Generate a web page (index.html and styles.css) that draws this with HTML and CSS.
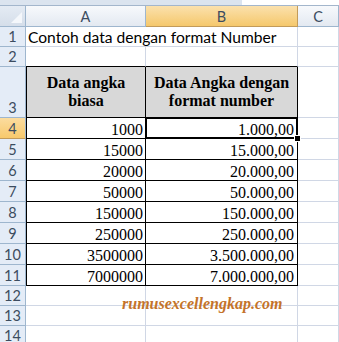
FILE: index.html
```html
<!DOCTYPE html>
<html>
<head>
<meta charset="utf-8">
<link rel="stylesheet" href="styles.css">
</head>
<body>
<div class="topbar"><div class="namebox"></div><div class="fbar"></div></div>
<div class="sheet">
  <div class="corner"><span class="tri"></span></div>
  <div class="ch">A</div><div class="ch ch-sel">B</div><div class="ch">C</div>

  <div class="rh">1</div><div class="c title">Contoh data dengan format Number</div><div class="c"></div>

  <div class="rh">2</div><div class="c top-a"></div><div class="c top-b"></div><div class="c"></div>

  <div class="rh rh-bottom">3</div><div class="t th ta">Data angka<br>biasa</div><div class="t th">Data Angka dengan<br>format number</div><div class="c"></div>

  <div class="rh rh-sel">4</div><div class="t ta">1000</div><div class="t cur">1.000,00<span class="handle"></span></div><div class="c"></div>
  <div class="rh">5</div><div class="t ta">15000</div><div class="t">15.000,00</div><div class="c"></div>
  <div class="rh">6</div><div class="t ta">20000</div><div class="t">20.000,00</div><div class="c"></div>
  <div class="rh">7</div><div class="t ta">50000</div><div class="t">50.000,00</div><div class="c"></div>
  <div class="rh">8</div><div class="t ta">150000</div><div class="t">150.000,00</div><div class="c"></div>
  <div class="rh">9</div><div class="t ta">250000</div><div class="t">250.000,00</div><div class="c"></div>
  <div class="rh">10</div><div class="t ta">3500000</div><div class="t">3.500.000,00</div><div class="c"></div>
  <div class="rh">11</div><div class="t ta">7000000</div><div class="t">7.000.000,00</div><div class="c"></div>

  <div class="rh">12</div><div class="c"></div><div class="c"></div><div class="c"></div>
  <div class="rh">13</div><div class="c"></div><div class="c"></div><div class="c"></div>
  <div class="rh">14</div><div class="c"></div><div class="c"></div><div class="c"></div>

  <div class="watermark">rumusexcellengkap.com</div>
</div>
</body>
</html>
```
FILE: styles.css
```css
html, body {
  margin: 0;
  padding: 0;
  background: #ffffff;
}
body {
  width: 339px;
  height: 342px;
  overflow: hidden;
  font-family: Lato, "Open Sans", sans-serif;
}
.topbar {
  display: flex;
  height: 5px;
  border-bottom: 1px solid #a3b6cc;
}
.namebox {
  width: 242px;
  background: #dbe4ef;
}
.fbar {
  flex: 1;
  background: #ffffff;
}
.sheet {
  position: relative;
  display: grid;
  grid-template-columns: 26px 120px 152px 41px;
  grid-template-rows: 21px 20px 20px 51px repeat(8, 21px) 20px 20px 20px;
}
.sheet > div {
  box-sizing: border-box;
}
.corner {
  position: relative;
  background: linear-gradient(#e4ebf4, #d5deea);
  border-right: 1px solid #9eb6ce;
  border-bottom: 1px solid #9eb6ce;
}
.tri {
  position: absolute;
  right: 3px;
  bottom: 3px;
  width: 11px;
  height: 11px;
  background: #f4f7fb;
  clip-path: polygon(100% 0, 100% 100%, 0 100%);
}
.ch {
  display: flex;
  align-items: center;
  justify-content: center;
  font-size: 14.5px;
  color: #3c4c60;
  background: linear-gradient(#f7f9fc, #e3e9f1);
  border-right: 1px solid #9eb6ce;
  border-bottom: 1px solid #9eb6ce;
}
.ch-sel {
  background: linear-gradient(#fbe1ad, #f5c86c);
  border-right-color: #c29b5a;
  border-bottom-color: #c29b5a;
}
.rh {
  display: flex;
  align-items: center;
  justify-content: center;
  font-size: 14.5px;
  color: #3c4c60;
  background: #e4ecf7;
  border-right: 1px solid #9eb6ce;
  border-bottom: 1px solid #9eb6ce;
}
.rh-bottom {
  align-items: flex-end;
  padding-bottom: 1px;
}
.rh-sel {
  background: linear-gradient(#fbdc9f, #f7c96c);
  border-bottom-color: #c29b5a;
}
.c {
  border-right: 1px solid #d0d7e5;
  border-bottom: 1px solid #d0d7e5;
}
.title {
  grid-column: span 2;
  display: flex;
  align-items: center;
  padding-left: 2px;
  font-size: 15.6px;
  color: #000;
  white-space: nowrap;
}
.top-a, .top-b {
  border-bottom-color: #000;
}
.t {
  position: relative;
  display: flex;
  align-items: flex-end;
  justify-content: flex-end;
  padding-right: 3px;
  font-family: "Liberation Serif", "Times New Roman", serif;
  font-size: 16px;
  line-height: 17px;
  color: #000;
  border-right: 1px solid #000;
  border-bottom: 1px solid #000;
}
.ta {
  border-left: 1px solid #000;
  padding-right: 2px;
}
.th {
  align-items: center;
  justify-content: center;
  text-align: center;
  padding: 0;
  font-weight: bold;
  line-height: 18px;
  background: #d8d8d8;
}
.cur {
  box-shadow: inset 0 0 0 1px #000;
}
.handle {
  position: absolute;
  right: -4px;
  bottom: -4px;
  width: 5px;
  height: 5px;
  background: #000;
  border: 1px solid #fff;
  z-index: 2;
}
.watermark {
  position: absolute;
  left: 122px;
  top: 289px;
  font-family: "Liberation Serif", "Times New Roman", serif;
  font-style: italic;
  font-weight: bold;
  font-size: 16px;
  color: #c4732a;
  white-space: nowrap;
}
```
